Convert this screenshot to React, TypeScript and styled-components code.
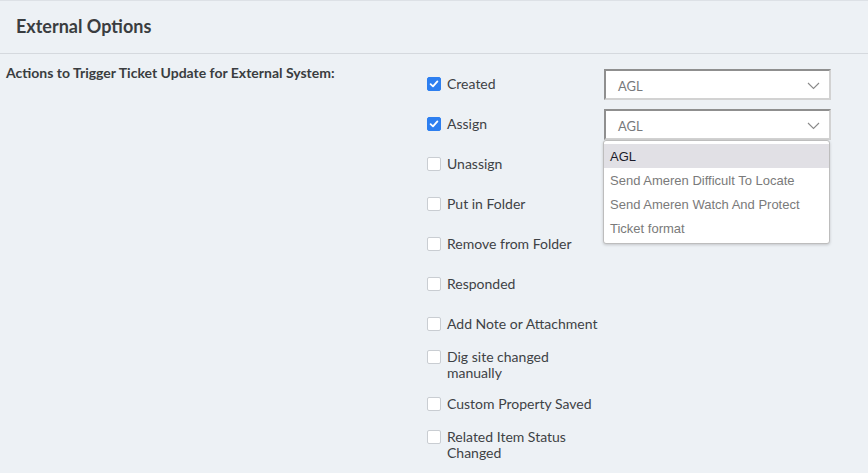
import React from "react";
import styled, { createGlobalStyle } from "styled-components";

const Global = createGlobalStyle`
  html, body { margin: 0; padding: 0; background: #edf1f5; }
  body { font-family: Lato, "Open Sans", "Liberation Sans", sans-serif; color: #3a3d40; }
  * { box-sizing: border-box; }
`;

const Page = styled.div`
  width: 868px;
  height: 473px;
  overflow: hidden;
  border-top: 1px solid #dde1e6;
  background: #edf1f5;
`;

const Header = styled.div`
  height: 53px;
  display: flex;
  align-items: center;
  padding: 0 0 3px 16px;
  border-bottom: 1px solid #d5d9de;
  font-size: 18px;
  font-weight: 700;
  color: #3a3d40;
`;

const Section = styled.div`
  display: flex;
  align-items: flex-start;
`;

const SectionLabel = styled.div`
  width: 427px;
  padding: 10px 0 0 6px;
  font-size: 14px;
  line-height: 17px;
  font-weight: 700;
  color: #3a3d40;
`;

const List = styled.div`
  display: flex;
  flex-direction: column;
  padding-top: 10px;
`;

const Row = styled.div`
  height: 40px;
  display: flex;
  align-items: center;
  position: relative;
`;

const Option = styled.label<{ $wrap?: boolean }>`
  width: 177px;
  display: flex;
  align-items: flex-start;
  gap: 6px;
  padding-top: ${(p) => (p.$wrap ? "2px" : "0")};
`;

const Box = styled.span<{ $checked?: boolean }>`
  flex: none;
  width: 14px;
  height: 14px;
  margin-top: 1px;
  border-radius: 2px;
  display: flex;
  align-items: center;
  justify-content: center;
  background: ${(p) => (p.$checked ? "#2d7ff0" : "#ffffff")};
  border: 1px solid ${(p) => (p.$checked ? "#2d7ff0" : "#c9cdd2")};
`;

const OptionText = styled.span`
  max-width: 155px;
  font-size: 14px;
  line-height: 16px;
  color: #3e4245;
`;

const Select = styled.div`
  width: 227px;
  height: 31px;
  background: #fff;
  border-style: solid;
  border-width: 2px;
  border-color: #8f8f8f #d2d2d2 #d2d2d2 #8f8f8f;
  display: flex;
  align-items: center;
  justify-content: space-between;
  padding: 3px 9px 0 12px;
  font-size: 13px;
  color: #77797c;
`;

const Menu = styled.ul`
  position: absolute;
  left: 176px;
  top: 36px;
  width: 227px;
  margin: 0;
  padding: 3px 0;
  list-style: none;
  background: #fff;
  border: 1px solid #bdbdbd;
  border-radius: 3px;
  box-shadow: 0 1px 3px rgba(0, 0, 0, 0.18);
  z-index: 2;
`;

const MenuItem = styled.li<{ $active?: boolean }>`
  height: 24px;
  display: flex;
  align-items: center;
  padding-left: 6px;
  font-family: "Liberation Sans", Arial, sans-serif;
  font-size: 13px;
  color: ${(p) => (p.$active ? "#1b1b2a" : "#7a7a7a")};
  background: ${(p) => (p.$active ? "#e1e0e5" : "transparent")};
`;

const Check = () => (
  <svg width="10" height="10" viewBox="0 0 10 10">
    <path d="M1.6 5.2 L4 7.4 L8.4 2.4" fill="none" stroke="#fff" strokeWidth="1.8" strokeLinecap="round" strokeLinejoin="round" />
  </svg>
);

const Chevron = () => (
  <svg width="13" height="8" viewBox="0 0 13 8">
    <path d="M1 1 L6.5 6.5 L12 1" fill="none" stroke="#8a8a8a" strokeWidth="1.1" />
  </svg>
);

const options: { text: string; checked?: boolean; select?: boolean; menu?: boolean; wrap?: boolean }[] = [
  { text: "Created", checked: true, select: true },
  { text: "Assign", checked: true, select: true, menu: true },
  { text: "Unassign" },
  { text: "Put in Folder" },
  { text: "Remove from Folder" },
  { text: "Responded" },
  { text: "Add Note or Attachment" },
  { text: "Dig site changed manually", wrap: true },
  { text: "Custom Property Saved" },
  { text: "Related Item Status Changed", wrap: true },
];

const menuItems = ["AGL", "Send Ameren Difficult To Locate", "Send Ameren Watch And Protect", "Ticket format"];

export default function App() {
  return (
    <>
      <Global />
      <Page>
        <Header>External Options</Header>
        <Section>
          <SectionLabel>Actions to Trigger Ticket Update for External System:</SectionLabel>
          <List>
            {options.map((o) => (
              <Row key={o.text}>
                <Option $wrap={o.wrap}>
                  <Box $checked={o.checked}>{o.checked && <Check />}</Box>
                  <OptionText>{o.text}</OptionText>
                </Option>
                {o.select && (
                  <Select>
                    <span>AGL</span>
                    <Chevron />
                  </Select>
                )}
                {o.menu && (
                  <Menu>
                    {menuItems.map((m, i) => (
                      <MenuItem key={m} $active={i === 0}>
                        {m}
                      </MenuItem>
                    ))}
                  </Menu>
                )}
              </Row>
            ))}
          </List>
        </Section>
      </Page>
    </>
  );
}
